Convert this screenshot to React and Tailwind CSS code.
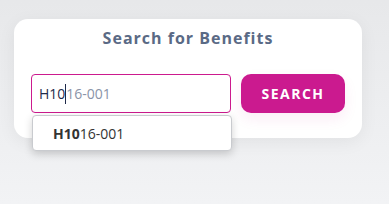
import React from "react";

const App = () => {
  return (
    <div
      className="min-h-screen w-full bg-gradient-to-b from-[#e7e8ea] to-[#f2f3f5] pt-[19px] pl-[14px]"
      style={{ fontFamily: "'Open Sans', 'Liberation Sans', sans-serif" }}
    >
      <div className="w-[348px] h-[119px] bg-white rounded-[14px] shadow-[0_4px_18px_rgba(0,0,0,0.06)] px-[17px] pt-[8px]">
        <h2 className="text-center text-[16px] leading-[22px] font-bold tracking-[1px] text-[#5a6a85]">
          Search for Benefits
        </h2>

        <div className="flex gap-[10px] mt-[25px]">
          <div className="relative">
            <div className="w-[200px] h-[39px] border border-[#cc1a8e] rounded-[4px] flex items-center pl-[7px] text-[14px]">
              <span className="text-[#1e2a4a]">H10</span>
              <span className="w-px h-[20px] bg-[#1e2a4a]" />
              <span className="text-[#8a93a8]">16-001</span>
            </div>
            <div className="absolute left-[1px] top-[41px] w-[200px] h-[36px] bg-white border border-[#c9cbcf] rounded-[4px] shadow-[0_3px_8px_rgba(0,0,0,0.18)] flex items-center pl-[20px] text-[14px] text-[#333]">
              <span className="font-bold">H10</span>
              <span>16-001</span>
            </div>
          </div>
          <button className="w-[104px] h-[39px] bg-[#cb1a8f] rounded-[10px] text-white font-bold text-[14px] tracking-[1.5px] shadow-[0_6px_14px_rgba(203,26,143,0.08)]">
            SEARCH
          </button>
        </div>
      </div>
    </div>
  );
};

export default App;
